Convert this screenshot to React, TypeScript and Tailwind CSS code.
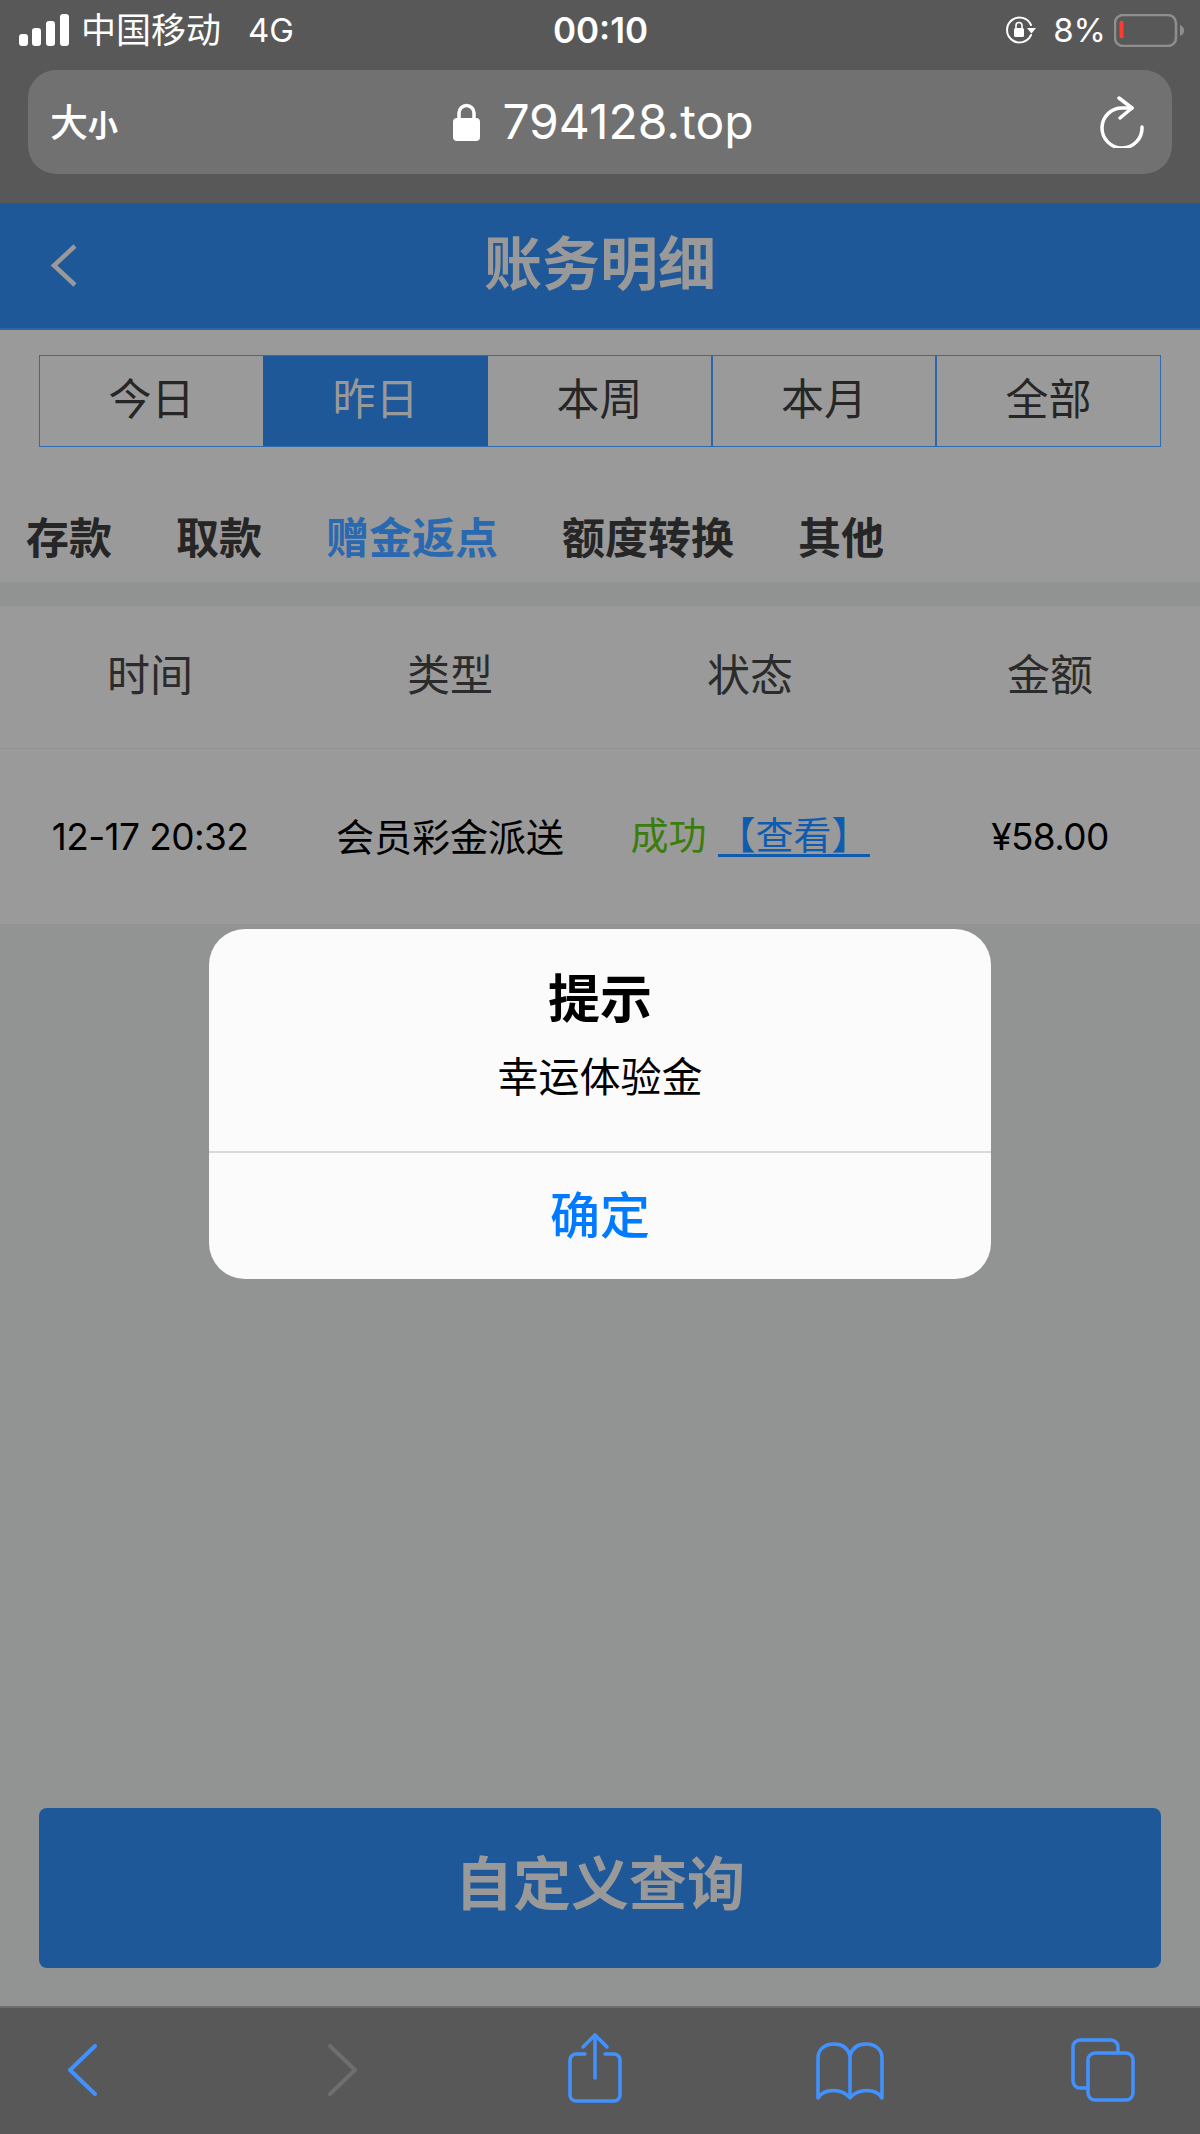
const tabs = ["今日", "昨日", "本周", "本月", "全部"];
const navs = ["存款", "取款", "赠金返点", "额度转换", "其他"];
const cols = ["时间", "类型", "状态", "金额"];

function SignalIcon() {
  return (
    <svg width="50" height="32" viewBox="0 0 50 32" fill="#fff">
      <rect x="0" y="20" width="9" height="12" rx="3" />
      <rect x="13" y="14" width="9" height="18" rx="3" />
      <rect x="27" y="7" width="9" height="25" rx="3" />
      <rect x="41" y="0" width="9" height="32" rx="3" />
    </svg>
  );
}

function RotationLockIcon() {
  return (
    <svg width="32" height="28" viewBox="0 0 32 28" fill="none">
      <path d="M26 9A12.5 12.5 0 1 0 26 19" stroke="#fff" strokeWidth="2" strokeLinecap="round" />
      <path d="M22 12h9l-4.500 5.500z" fill="#fff" />
      <rect x="9" y="12" width="10" height="9" rx="1.500" fill="#fff" />
      <path d="M11 12V9.500a3 3 0 0 1 6 0V12" stroke="#fff" strokeWidth="1.600" />
    </svg>
  );
}

function BatteryIcon() {
  return (
    <svg width="71" height="33" viewBox="0 0 71 33" fill="none">
      <rect x="1" y="1" width="61" height="31" rx="8" stroke="#8e8e8e" strokeWidth="2.500" />
      <rect x="5.500" y="7" width="4" height="17" rx="1" fill="#ff3b30" />
      <path d="M66 11c3 1 4 3 4 5.500s-1 4.500-4 5.500z" fill="#8e8e8e" />
    </svg>
  );
}

function LockIcon() {
  return (
    <svg width="27" height="38" viewBox="0 0 27 38" fill="none">
      <path d="M6 16V10a7.500 7.500 0 0 1 15 0v6" stroke="#fff" strokeWidth="3.500" />
      <rect x="0" y="15" width="27" height="23" rx="4" fill="#fff" />
    </svg>
  );
}

function ReloadIcon() {
  return (
    <svg width="46" height="52" viewBox="0 0 46 52" fill="none" stroke="#fff" strokeWidth="3.500" strokeLinecap="round" strokeLinejoin="round">
      <path d="M33 12H24A20 20 0 1 0 43 31" />
      <path d="M20 2L33 12L21 22" />
    </svg>
  );
}

function BackIcon() {
  return (
    <svg width="27" height="43" viewBox="0 0 27 43" fill="none" stroke="#999999" strokeWidth="4.500">
      <path d="M25 2L4 21.500L25 41" />
    </svg>
  );
}

function BarChevron({ dir, color }: { dir: "left" | "right"; color: string }) {
  return (
    <svg width="29" height="52" viewBox="0 0 29 52" fill="none" stroke={color} strokeWidth="4" strokeLinecap="round" strokeLinejoin="round">
      <path d={dir === "left" ? "M27 2L2 26L27 50" : "M2 2L27 26L2 50"} />
    </svg>
  );
}

function ShareIcon() {
  return (
    <svg width="54" height="70" viewBox="0 0 54 70" fill="none" stroke="#4191ff" strokeWidth="3.500" strokeLinecap="round" strokeLinejoin="round">
      <path d="M27 45V2" />
      <path d="M15 14L27 2L39 14" />
      <path d="M17 21H8a6 6 0 0 0-6 6v35a6 6 0 0 0 6 6h38a6 6 0 0 0 6-6V27a6 6 0 0 0-6-6h-9" />
    </svg>
  );
}

function BookIcon() {
  return (
    <svg width="68" height="58" viewBox="0 0 68 58" fill="none" stroke="#4191ff" strokeWidth="3.500" strokeLinejoin="round">
      <path d="M34 14C32 6 26 2 18 2C8 2 2 8 2 16V56C8 46 26 46 34 56C42 46 60 46 66 56V16C66 8 60 2 50 2C42 2 36 6 34 14Z" />
      <path d="M34 14V56" />
    </svg>
  );
}

function TabsIcon() {
  return (
    <svg width="64" height="64" viewBox="0 0 64 64" fill="none" stroke="#4191ff" strokeWidth="3.500">
      <rect x="17" y="15" width="45" height="47" rx="7" />
      <path d="M17 50H9a7 7 0 0 1-7-7V9a7 7 0 0 1 7-7h31a7 7 0 0 1 7 7v6" />
    </svg>
  );
}

export default function App() {
  return (
    <div
      lang="zh-CN"
      className="relative flex h-[2134px] w-[1200px] flex-col overflow-hidden bg-[#929493] font-['Inter','Noto_Sans_CJK_SC',sans-serif]"
    >
      {/* status bar + address bar */}
      <div className="h-[203px] bg-[#585858] text-white">
        <div className="grid h-[70px] grid-cols-[1fr_auto_1fr] items-center pb-[10px] pl-[19px] pr-[15px]">
          <div className="flex items-center">
            <SignalIcon />
            <span className="ml-[12px] text-[35px] leading-none">中国移动</span>
            <span className="ml-[27px] text-[33px] leading-none">4G</span>
          </div>
          <div className="mr-[3px] text-[35px] font-semibold leading-none">00:10</div>
          <div className="flex items-center justify-end">
            <RotationLockIcon />
            <span className="ml-[16px] text-[33px] leading-none">8%</span>
            <span className="ml-[8px] flex">
              <BatteryIcon />
            </span>
          </div>
        </div>
        <div className="mx-[28px] grid h-[104px] grid-cols-[1fr_auto_1fr] items-center rounded-[28px] bg-[#717171] pl-[22px] pr-[15px]">
          <div className="flex items-baseline font-medium leading-none">
            <span className="text-[38px]">大</span>
            <span className="text-[30px] font-semibold">小</span>
          </div>
          <div className="flex items-center">
            <LockIcon />
            <span className="ml-[22px] text-[48px] leading-none">794128.top</span>
          </div>
          <div className="mr-[12px] flex justify-end">
            <ReloadIcon />
          </div>
        </div>
      </div>

      {/* title */}
      <div className="grid h-[127px] grid-cols-[1fr_auto_1fr] items-center border-b-2 border-[#2a66a8] bg-[#1e5899] pl-[50px] pr-[50px]">
        <BackIcon />
        <div className="pb-[3px] text-[58px] font-bold leading-none text-[#999999]">账务明细</div>
      </div>

      {/* date tabs, type tabs */}
      <div className="bg-[#9a9a9a]">
        <div className="mx-[39px] mt-[25px] grid h-[92px] grid-cols-[223px_225px_225px_224px_1fr] border border-[#2f6db3]">
          {tabs.map((t, i) => (
            <div
              key={t}
              className={
                i === 1
                  ? "flex items-center justify-center bg-[#1e5899] pb-[3px] text-[43px] text-[#999999]"
                  : i === 4 || i === 0
                    ? "flex items-center justify-center pb-[3px] text-[43px] text-[#262626]"
                    : "flex items-center justify-center border-r-2 border-[#2a66ad] pb-[3px] text-[43px] text-[#262626]"
              }
            >
              {t}
            </div>
          ))}
        </div>
        <div className="flex h-[135px] items-center gap-[64px] pl-[26px] pt-[48px] text-[43px] font-bold leading-none text-[#262626]">
          {navs.map((n) => (
            <span key={n} className={n === "赠金返点" ? "text-[#2a68b0]" : ""}>
              {n}
            </span>
          ))}
        </div>
      </div>
      <div className="h-[24px] bg-[#919392]" />

      {/* table */}
      <div className="bg-[#9a9a9a]">
        <div className="grid h-[143px] grid-cols-4 items-center border-b border-[#929292] pb-[3px] text-center text-[43px] text-[#2b2b2b]">
          {cols.map((c) => (
            <div key={c}>{c}</div>
          ))}
        </div>
        <div className="grid h-[175px] grid-cols-4 items-center text-center text-[37px] leading-none tracking-[-0.6px] text-black">
          <div>12-17 20:32</div>
          <div className="text-[38px] tracking-normal">会员彩金派送</div>
          <div className="flex justify-center whitespace-nowrap text-[38px] tracking-normal">
            <span className="text-[#3a7d0a]">成功</span>
            <span className="ml-[11px] border-b-[3px] border-[#0f5cae] text-[#0f5cae]">【查看】</span>
          </div>
          <div>¥58.00</div>
        </div>
      </div>

      {/* query button */}
      <div className="mt-auto px-[39px] pb-[38px]">
        <div className="flex h-[160px] items-center justify-center rounded-[8px] bg-[#1e5899] pb-[8px] text-[58px] font-bold leading-none text-[#999999]">
          自定义查询
        </div>
      </div>

      {/* safari toolbar */}
      <div className="flex h-[128px] items-start border-t-2 border-[#6e6e6e] bg-[#585858]">
        <div className="ml-[68px] mt-[36px] flex">
          <BarChevron dir="left" color="#4191ff" />
        </div>
        <div className="ml-[231px] mt-[36px] flex">
          <BarChevron dir="right" color="#6e6e6e" />
        </div>
        <div className="ml-[211px] mt-[25px] flex">
          <ShareIcon />
        </div>
        <div className="ml-[194px] mt-[34px] flex">
          <BookIcon />
        </div>
        <div className="ml-[187px] mt-[30px] flex">
          <TabsIcon />
        </div>
      </div>

      {/* alert */}
      <div className="absolute left-[209px] top-[929px] w-[782px] rounded-[36px] bg-[#fbfbfb] text-center">
        <div className="flex h-[224px] flex-col items-center border-b-2 border-[#d8d8d8] pt-[36px]">
          <div className="text-[52px] font-bold leading-[70px] text-black">提示</div>
          <div className="mt-[12px] text-[41px] leading-[60px] text-black">幸运体验金</div>
        </div>
        <div className="flex h-[126px] items-center justify-center text-[50px] font-medium leading-none text-[#007aff]">
          确定
        </div>
      </div>
    </div>
  );
}
